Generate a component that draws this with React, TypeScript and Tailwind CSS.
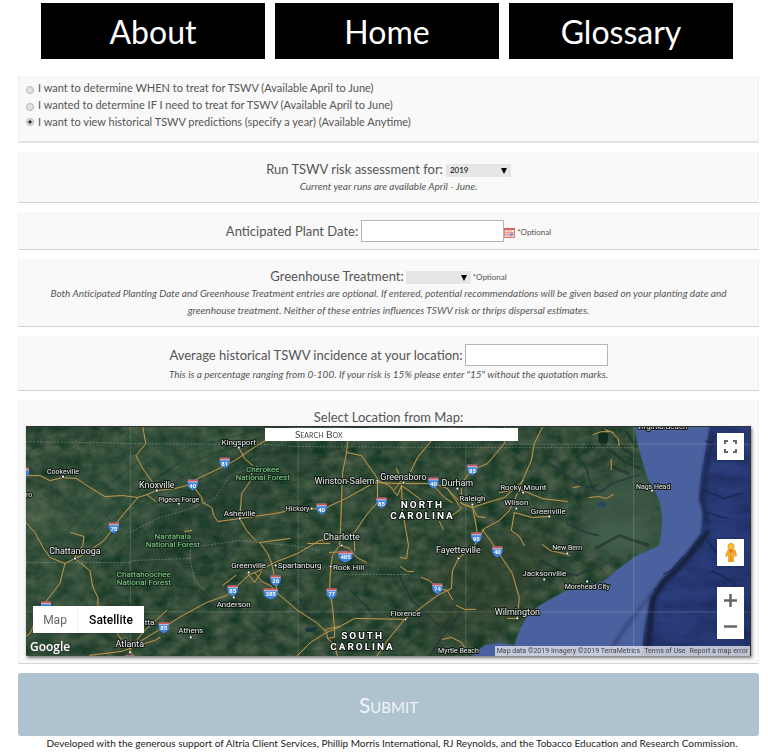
import React, { useState } from 'react';

type Label = { x: number; y: number; size: number; text: string; anchor?: 'start' | 'middle' | 'end'; dot?: [number, number] };
type Shield = { x: number; y: number; n: string };

const roads: string[] = [
  'M143 427L146 443L136 455L143 468L153 482L157 489',
  'M26 475L40 475L50 480L63 477L77 478L87 485L105 496L123 495L138 497L147 494L157 490L175 488L187 485L198 478L215 470L235 460L260 443L266 440',
  'M239 447L245 458L253 465L251 480L242 493L240 518L247 530L256 540',
  'M193 485L202 497L203 502L212 507L214 515L218 521L240 518L275 513L295 509L325 508L348 497L375 482L402 483L435 483L448 488L462 503L473 507L488 502L505 497L524 480',
  'M147 494L156 501M138 497L120 518L105 539L100 543L82 555L75 558L65 563L60 583L43 605L30 633L26 636',
  'M26 522L35 532L43 547L50 557L65 563M71 532L84 536L83 545L75 557',
  'M75 558L90 570L93 587L98 597L98 607L112 625L122 640L130 648L133 656',
  'M130 648L150 635L167 625L183 615L207 602L227 595L238 585L250 574L258 571L275 562L298 553L320 540L335 538L355 532L368 513L378 502L378 480',
  'M130 648L145 630L167 610M130 648L122 651L90 655M130 648L155 640L160 637M223 585L236 575M247 572L255 582L262 571',
  'M348 442L347 452L343 472L342 500L341 527L340 545L333 555L331 567L330 590L333 607L335 628',
  'M348 452L362 455L378 478M348 432L348 442M432 440L418 457L413 467L408 478L402 483',
  'M505 427L505 443L488 463L472 470L462 483M402 485L403 510L407 533L409 545L407 558L401 557',
  'M378 480L390 485L398 495L402 485L412 492L425 502M395 489L402 480L397 468',
  'M462 488L462 503L473 507L478 516L486 517M473 505L478 533M543 427L535 443L532 460L524 478L515 500L510 510L500 520L485 528L475 545L459 558L453 570L452 588L438 595L418 610L405 619L388 640L377 656',
  'M405 619L355 618L337 628L327 632L311 642L297 656',
  'M327 632L318 623L298 610L278 593L272 563L268 553L260 542M260 542L290 538',
  'M255 572L262 581L272 586L275 592M327 632L328 638L335 645L338 656M335 628L335 637L328 638M325 630L330 628L340 626',
  'M524 490L543 498L568 501M500 492L515 489L524 490M515 512L533 517L550 516M515 512L512 530L520 536L525 545',
  'M483 529L498 550L503 558L513 573L517 587L520 597L518 618L508 618',
  'M590 497L600 496L607 498L614 494M574 487L580 486M612 459L612 469M594 434L602 431L612 431L619 438L620 445M606 429L614 432',
  'M543 544L551 550L564 553L570 555M401 566L408 571L414 571M422 577L430 580L438 588L448 590L453 599M457 605L465 609L476 609M443 639L452 637L462 642L465 647',
  'M341 545L350 548L357 557L367 562M330 552L347 551M308 543L330 543M335 537L355 533L355 550',
  'M434 485L445 497L453 502M448 488L462 508L450 517M440 521L444 529M185 531L192 530',
];

const rivers: string[] = [
  'M550 463C560 468 568 478 580 483S592 488 600 483',
  'M582 461C590 468 588 478 594 487S605 488 612 483L640 474',
  'M568 523C578 528 588 534 600 535',
  'M540 560C555 565 565 575 578 575L590 568',
  'M475 595L455 620L440 640L430 656M400 575L412 600L440 625',
  'M300 598L315 625M351 590L372 612M222 560L228 552',
];

const labels: Label[] = [
  { x: 239, y: 444, size: 8, text: 'Kingsport', dot: [239, 447] },
  { x: 63, y: 473, size: 7, text: 'Cookeville', dot: [63, 476] },
  { x: 157, y: 487, size: 9, text: 'Knoxville', dot: [157, 490] },
  { x: 179, y: 501, size: 7, text: 'Pigeon Forge', dot: [179, 503] },
  { x: 26, y: 496, size: 7, text: 'ro', anchor: 'start' },
  { x: 240, y: 515, size: 8, text: 'Asheville', dot: [240, 518] },
  { x: 75, y: 554, size: 9, text: 'Chattanooga', dot: [75, 558] },
  { x: 249, y: 568, size: 8, text: 'Greenville', dot: [249, 572] },
  { x: 300, y: 568, size: 8, text: 'Spartanburg', dot: [276, 565] },
  { x: 349, y: 570, size: 8, text: 'Rock Hill', dot: [331, 566] },
  { x: 234, y: 607, size: 8, text: 'Anderson', dot: [234, 597] },
  { x: 191, y: 633, size: 8, text: 'Athens', dot: [191, 637] },
  { x: 145, y: 625, size: 8, text: 'tta', anchor: 'start' },
  { x: 130, y: 647, size: 9, text: 'Atlanta', dot: [130, 652] },
  { x: 345, y: 483, size: 9, text: 'Winston-Salem', dot: [378, 480] },
  { x: 404, y: 479, size: 9, text: 'Greensboro', dot: [404, 482] },
  { x: 458, y: 485, size: 9, text: 'Durham', dot: [458, 488] },
  { x: 473, y: 500, size: 8, text: 'Raleigh', dot: [473, 504] },
  { x: 298, y: 510, size: 7, text: 'Hickory', dot: [312, 508] },
  { x: 342, y: 540, size: 9, text: 'Charlotte', dot: [342, 545] },
  { x: 459, y: 553, size: 9, text: 'Fayetteville', dot: [459, 558] },
  { x: 406, y: 616, size: 8, text: 'Florence', dot: [406, 619] },
  { x: 459, y: 653, size: 7, text: 'Myrtle Beach' },
  { x: 524, y: 489, size: 8, text: 'Rocky Mount', dot: [524, 492] },
  { x: 517, y: 504, size: 8, text: 'Wilson', dot: [517, 508] },
  { x: 549, y: 513, size: 8, text: 'Greenville', dot: [550, 516] },
  { x: 654, y: 488, size: 7, text: 'Nags Head', dot: [653, 490] },
  { x: 663, y: 428, size: 8, text: 'Virginia Beach' },
  { x: 568, y: 550, size: 7, text: 'New Bern', dot: [568, 553] },
  { x: 545, y: 576, size: 8, text: 'Jacksonville', dot: [545, 579] },
  { x: 588, y: 589, size: 7, text: 'Morehead City', dot: [588, 581] },
  { x: 518, y: 615, size: 9, text: 'Wilmington', dot: [518, 618] },
];

const forests: [number, number, string, string][] = [
  [263, 471, 'Cherokee', 'National Forest'],
  [173, 539, 'Nantahala', 'National Forest'],
  [144, 577, 'Chattahoochee', 'National Forest'],
];

const states: [number, number, string, string][] = [
  [423, 507, 'NORTH', 'CAROLINA'],
  [363, 639, 'SOUTH', 'CAROLINA'],
];

const shields: Shield[] = [
  { x: 24, y: 472, n: '' }, { x: 225, y: 462, n: '81' }, { x: 193, y: 484, n: '40' }, { x: 114, y: 527, n: '75' },
  { x: 233, y: 590, n: '85' }, { x: 164, y: 627, n: '85' }, { x: 46, y: 606, n: '' }, { x: 322, y: 508, n: '40' },
  { x: 382, y: 502, n: '85' }, { x: 434, y: 482, n: '40' }, { x: 473, y: 469, n: '85' }, { x: 477, y: 537, n: '95' },
  { x: 346, y: 556, n: '485' }, { x: 276, y: 580, n: '26' }, { x: 271, y: 593, n: '385' }, { x: 332, y: 593, n: '77' },
  { x: 438, y: 588, n: '74' }, { x: 498, y: 551, n: '40' }, { x: 130, y: 660, n: '' },
];

function InterstateShield({ x, y, n }: Shield) {
  const w = n.length > 2 ? 7 : 5;
  return (
    <g transform={`translate(${x} ${y})`}>
      <path d={`M${-w} -5H${w}V-2C${w + 1} 2 ${w - 2} 4 0 6C${2 - w} 4 ${-w - 1} 2 ${-w} -2Z`} fill="#3f82dc" />
      <path d={`M${-w} -5H${w}V-3H${-w}Z`} fill="#d9564f" />
      <path d={`M${-w} -2.7H${w}`} stroke="#fff" strokeWidth=".6" />
      <text y="3" textAnchor="middle" fontSize="6" fontWeight="700" fill="#fff">{n}</text>
    </g>
  );
}

const coast =
  'M635 426L640 450L648 477L660 500L663 517L661 540L660 545L637 555L617 570L603 582L590 584L567 590L540 605L527 617L520 630L515 645L500 642L485 645L472 656H752V426Z';
const deep = 'M711 426L706 455L702 477L700 500L705 510L702 533L697 540L680 563L663 580L652 597L649 612L645 630L643 656H752V426Z';

function SatelliteMap() {
  return (
    <svg className="block h-full w-full" viewBox="26 426 725 230" preserveAspectRatio="xMidYMid slice" role="img" aria-label="Satellite map" fontFamily="Roboto, sans-serif">
      <defs>
        <filter id="terrain" x="0" y="0" width="1" height="1" colorInterpolationFilters="sRGB">
          <feTurbulence type="fractalNoise" baseFrequency=".07 .09" numOctaves="6" seed="8" />
          <feColorMatrix values=".30 .12 0 0 -.02  .22 .05 0 0 .16  .20 .07 0 0 .08  0 0 0 0 1" />
        </filter>
        <filter id="seabed" x="0" y="0" width="1" height="1" colorInterpolationFilters="sRGB">
          <feTurbulence type="fractalNoise" baseFrequency=".03 .08" numOctaves="4" seed="3" />
          <feColorMatrix values="0 0 0 0 .03  0 0 0 0 .06  0 0 0 0 .18  1.6 0 0 0 -.62" />
        </filter>
        <filter id="soft" x="-.2" y="-.2" width="1.4" height="1.4"><feGaussianBlur stdDeviation="7" /></filter>
        <filter id="edge" x="-.2" y="-.2" width="1.4" height="1.4"><feGaussianBlur stdDeviation="1.5" /></filter>
        <linearGradient id="abyss" x1="0" y1="0" x2="1" y2="1">
          <stop offset="0" stopColor="#28386f" /><stop offset=".5" stopColor="#2b3e7c" /><stop offset="1" stopColor="#22346e" />
        </linearGradient>
        <clipPath id="sea"><path d={coast} /></clipPath>
        <clipPath id="deepSea"><path d={deep} /></clipPath>
      </defs>
      <rect x="26" y="426" width="726" height="230" filter="url(#terrain)" />
      <g filter="url(#soft)">
        <path d="M26 530L120 426H260L200 480L110 560L60 656H26Z" fill="#3f6548" opacity=".22" />
        <path d="M150 510L250 450L330 440L240 520L180 580L110 600Z" fill="#163a2a" opacity=".3" />
        <path d="M440 540L560 530L540 590L480 640H420Z" fill="#303f2e" opacity=".35" />
        <path d="M600 480L650 465L662 520L655 548L615 560L575 540Z" fill="#405947" opacity=".8" />
        <ellipse cx="620" cy="535" rx="30" ry="13" fill="#43604e" />
        <path d="M26 480L55 500L45 530H26Z" fill="#65755a" opacity=".45" />
      </g>
      <g stroke="#173526" fill="none" opacity=".42">
        <path d="M70 560L120 500L180 462M82 570L130 512L205 462M94 580L140 530M64 535L100 490L155 450M110 590L128 560M180 450L265 428M190 462L262 437M205 500L265 455M212 520L260 485" />
      </g>
      <g stroke="#6e8a66" strokeWidth=".6" fill="none" opacity=".35">
        <path d="M74 564L124 504L184 462M90 572L136 520L170 496M70 535L108 490L160 450M186 458L263 433M200 482L265 448M128 432L110 446L80 442L60 456M30 450L55 445L72 458M280 605L305 595M380 565L420 548" />
      </g>
      <g stroke="#25363b" fill="none" strokeWidth="2" opacity=".7">{rivers.map((d) => <path key={d} d={d} />)}</g>
      <ellipse cx="604" cy="437" rx="5" ry="8" fill="#122c20" />
      <ellipse cx="603" cy="504" rx="4" ry="3" fill="#244b5b" />
      <path d="M305 628L318 626L315 631L307 632Z" fill="#17363e" />
      <g stroke="#1c3027" fill="none" strokeWidth="3" opacity=".6">
        <path d="M614 437L626 450L635 455M612 450L626 462L642 468M610 465L630 473M627 430L637 447M596 548L620 535L650 545" />
      </g>
      <path d={coast} fill="#4b609e" stroke="#315e5a" strokeWidth="1" />
      <g clipPath="url(#sea)">
        <path d={deep} fill="#29396b" filter="url(#edge)" />
        <g clipPath="url(#deepSea)">
          <rect x="640" y="426" width="112" height="230" fill="url(#abyss)" />
          <rect x="640" y="426" width="112" height="230" filter="url(#seabed)" opacity=".4" />
        </g>
        <g filter="url(#edge)" fill="none">
          <path d="M710 530L696 548L682 565L664 582L654 598L652 615L648 656" stroke="#18223f" strokeWidth="6" />
          <path d="M714 434L707 470L704 500L708 525" stroke="#1e2a54" strokeWidth="5" />
          <path d="M650 597L630 620L605 656M658 585L640 610L615 645" stroke="#394a80" strokeWidth="2" />
        </g>
        <path d="M664 574L672 570L684 556M655 590L665 582M708 540L718 553L734 558M712 570L735 582L740 605M706 440L720 446L735 440M706 490L725 498L745 492M708 512L728 518" fill="none" stroke="#16214a" strokeWidth="1.5" opacity=".7" />
      </g>
      <g stroke="#dbe6e0" strokeWidth=".7" opacity=".28">
        <path d="M130.500 426V656M298.500 426V656M466.500 426V656M634.500 426V656M26 611.500H751M500 443.500H751" />
      </g>
      <path d="M26 441L100 442L130 443L270 444L300 446L500 447L634 447M26 562L130 562L133 560L190 558L191 547L240 540L300 546L320 550M345 574L412 574M190 558L195 580L215 600M130 532L160 517L185 510L215 498L230 475L260 465" fill="none" stroke="#c8d5c9" strokeWidth=".8" strokeDasharray="2 1.500" opacity=".4" />
      <g fill="none" strokeLinejoin="round" strokeLinecap="round">
        {roads.map((d) => <path key={d} d={d} stroke="#6a5526" strokeWidth="2" opacity=".45" />)}
        {roads.map((d) => <path key={d} d={d} stroke="#b69a55" strokeWidth="1" />)}
      </g>
      {shields.map((s) => <InterstateShield key={`${s.x}-${s.y}`} {...s} />)}
      <g stroke="#101814" strokeWidth="2" strokeLinejoin="round" paintOrder="stroke" fill="#e9ece9">
        {labels.map((l) => (
          <g key={`${l.text}${l.x}`}>
            {l.dot && <rect x={l.dot[0] - 1} y={l.dot[1] - 1} width="2" height="2" fill="#fff" strokeWidth="1" />}
            <text x={l.x} y={l.y} fontSize={l.size} textAnchor={l.anchor ?? 'middle'}>{l.text}</text>
          </g>
        ))}
        {forests.map(([x, y, a, b]) => (
          <text key={a} fontSize="8" textAnchor="middle" fill="#86cf8b" stroke="#14291b">
            <tspan x={x} y={y}>{a}</tspan><tspan x={x} y={y + 8}>{b}</tspan>
          </text>
        ))}
        {states.map(([x, y, a, b]) => (
          <text key={a} className="tracking-[2px]" fontSize="10" fontWeight="700" textAnchor="middle" fill="#fff">
            <tspan x={x} y={y}>{a}</tspan><tspan x={x} y={y + 11}>{b}</tspan>
          </text>
        ))}
      </g>
    </svg>
  );
}

function Card({ children }: { children: React.ReactNode }) {
  return (
    <section className="border-x border-b border-x-[#f2f2f2] border-b-[#d2d2d2] bg-[#f9f9f9] px-[7px] pt-2 pb-[7px] text-center">
      {children}
    </section>
  );
}

const labelText = 'text-[13px] leading-[18px]';
const noteText = 'px-2 text-[10px] leading-[17px] italic';

function SmallSelect({ id, options, initial }: { id: string; options: string[]; initial: string }) {
  return (
    <span className="relative mt-[2px] inline-block">
      <select id={id} defaultValue={initial} className="block h-[13px] w-[65px] appearance-none bg-[#e6e6e6] pl-1 text-[8px] leading-[13px] text-black">
        {options.map((o) => <option key={o}>{o}</option>)}
      </select>
      <svg className="pointer-events-none absolute top-1 right-1 h-[6px] w-[6px]" viewBox="0 0 6 6" aria-hidden="true"><path d="M0 0H6L3 6Z" /></svg>
    </span>
  );
}

function CalendarIcon() {
  return (
    <svg className="h-[10px] w-[11px]" viewBox="0 0 11 10" aria-hidden="true">
      <rect width="11" height="10" fill="#e08078" />
      <path d="M0 0H11V2H0Z" fill="#d4665d" />
      <path d="M1 2H10V9H1Z" fill="#fbe3e0" />
      <path d="M1 4.500H10M1 6.500H10M3 2V9M5 2V9M7 2V9" stroke="#e58e85" strokeWidth=".8" />
      <rect x="6" y="5" width="3" height="3" fill="#7f9be0" />
    </svg>
  );
}

const modes = [
  'I want to determine WHEN to treat for TSWV (Available April to June)',
  'I wanted to determine IF I need to treat for TSWV (Available April to June)',
  'I want to view historical TSWV predictions (specify a year) (Available Anytime)',
];

const mapButton = 'flex items-center justify-center bg-white shadow';

export default function App() {
  const [mode, setMode] = useState(2);
  return (
    <main className="bg-white pt-[3px] pr-[9px] pl-[18px] font-['Lato',sans-serif] text-[#555]">
      <nav className="mb-[17px] grid grid-cols-3 gap-[10px] pr-[26px] pl-[23px]">
        {['About', 'Home', 'Glossary'].map((t) => (
          <a key={t} href="#" className="flex h-14 items-center justify-center bg-black pt-[2px] text-[32px] text-white">{t}</a>
        ))}
      </nav>
      <form className="flex flex-col gap-[9px]" onSubmit={(e) => e.preventDefault()}>
        <fieldset className="border-x border-b-2 border-x-[#eee] border-b-[#e2e2e2] bg-[#f9f9f9] px-[7px] pt-[3px] pb-[11px]">
          {modes.map((m, i) => (
            <label key={m} className="flex h-[17px] items-center gap-1 text-[11px] leading-[17px]">
              <input
                type="radio"
                name="mode"
                checked={mode === i}
                onChange={() => setMode(i)}
                className="mt-1 h-2 w-2 appearance-none rounded-full border border-[#b5b5b5] bg-[#e2e2e2] checked:mt-0 checked:bg-[radial-gradient(#333_30%,#e2e2e2_50%)]"
              />
              {m}
            </label>
          ))}
        </fieldset>

        <Card>
          <div className={`flex items-center justify-center gap-[3px] ${labelText}`}>
            <label htmlFor="year">Run TSWV risk assessment for:</label>
            <SmallSelect id="year" initial="2019" options={['2017', '2018', '2019']} />
          </div>
          <p className={noteText}>Current year runs are available April - June.</p>
        </Card>

        <Card>
          <div className={`flex items-center justify-center ${labelText}`}>
            <label htmlFor="plant" className="mr-[3px]">Anticipated Plant Date:</label>
            <input id="plant" type="text" className="h-[22px] w-[143px] border border-[#b5b5b5] bg-white px-1 text-[12px]" />
            <button type="button" aria-label="Pick a date" className="mt-[3px] mr-[2px]"><CalendarIcon /></button>
            <span className="mt-[3px] text-[8px] leading-[13px]">*Optional</span>
          </div>
        </Card>

        <Card>
          <div className={`flex items-center justify-center gap-[2px] ${labelText}`}>
            <label htmlFor="greenhouse">Greenhouse Treatment:</label>
            <SmallSelect id="greenhouse" initial="" options={['', 'Yes', 'No']} />
            <span className="mt-[3px] text-[8px] leading-[13px]">*Optional</span>
          </div>
          <p className={noteText}>
            Both Anticipated Planting Date and Greenhouse Treatment entries are optional. If entered, potential recommendations will be given based on your planting date and greenhouse treatment. Neither of these entries influences TSWV risk or thrips dispersal estimates.
          </p>
        </Card>

        <Card>
          <div className={`flex items-center justify-center gap-[2px] ${labelText}`}>
            <label htmlFor="incidence">Average historical TSWV incidence at your location:</label>
            <input id="incidence" type="text" className="h-[22px] w-[143px] border border-[#b5b5b5] bg-white px-1 text-[12px]" />
          </div>
          <p className={noteText}>This is a percentage ranging from 0-100. If your risk is 15% please enter "15" without the quotation marks.</p>
        </Card>

        <Card>
          <h2 className={labelText}>Select Location from Map:</h2>
          <div className="relative h-[230px] overflow-hidden border-t border-r border-[#333] font-['Roboto',sans-serif] shadow-[1px_2px_3px_#777]">
            <SatelliteMap />
            <input
              type="text"
              aria-label="Search Box"
              placeholder="Search Box"
              className="absolute top-[1px] left-[33%] h-[13px] w-[35%] bg-white pl-[30px] font-['Lato',sans-serif] text-[10px] [font-variant:small-caps] placeholder:text-[#444]"
            />
            <div className="absolute bottom-[23px] left-[7px] flex h-[27px] bg-white text-[12px] shadow">
              <button type="button" className="w-[45px] border-r border-[#eee] text-[#666]">Map</button>
              <button type="button" className="w-[66px] font-medium text-black">Satellite</button>
            </div>
            <span className="absolute bottom-[1px] left-1 font-['Open_Sans',sans-serif] text-[12px] leading-[16px] font-semibold text-white [text-shadow:0_0_2px_#333]">Google</span>
            <button type="button" aria-label="Full screen" className={`absolute top-[6px] right-[6px] h-[27px] w-[27px] ${mapButton}`}>
              <svg className="h-[13px] w-[13px]" viewBox="0 0 13 13" fill="none" stroke="#666" strokeWidth="2" aria-hidden="true"><path d="M1 4V1H4M9 1H12V4M12 9V12H9M4 12H1V9" /></svg>
            </button>
            <button type="button" aria-label="Street view" className={`absolute right-[6px] bottom-[90px] h-[27px] w-[27px] ${mapButton}`}>
              <svg className="h-5 w-[12px]" viewBox="0 0 12 20" aria-hidden="true">
                <path d="M2 8Q2 6 4 6H8Q10 6 11 8L12 13L10 14L9 12V19H3V12L2 14L0 13Z" fill="#f0a830" />
                <path d="M4 7L6 10L8 7Z" fill="#e06a2a" />
                <path d="M6 13V19" stroke="#c98017" strokeWidth=".8" />
                <circle cx="6" cy="3.500" r="3.200" fill="#f6b93b" stroke="#d99020" strokeWidth=".6" />
              </svg>
            </button>
            <div className="absolute right-[6px] bottom-[17px] flex w-[27px] flex-col">
              <button type="button" aria-label="Zoom in" className="flex h-[26px] items-center justify-center bg-white">
                <svg className="h-[13px] w-[13px]" viewBox="0 0 13 13" stroke="#666" strokeWidth="2.500" aria-hidden="true"><path d="M0 6.500H13M6.500 0V13" /></svg>
              </button>
              <button type="button" aria-label="Zoom out" className="flex h-[26px] items-center justify-center bg-white">
                <svg className="h-[13px] w-[13px]" viewBox="0 0 13 13" stroke="#666" strokeWidth="2.500" aria-hidden="true"><path d="M0 6.500H13" /></svg>
              </button>
            </div>
            <div className="absolute right-0 bottom-0 flex h-[10px] gap-1 bg-[#e4e6ec]/80 px-[2px] text-[7px] leading-[10px] text-[#444]">
              <span>Map data ©2019 Imagery ©2019 TerraMetrics</span>
              <a href="#">Terms of Use</a>
              <a href="#">Report a map error</a>
            </div>
          </div>
        </Card>

        <button type="submit" className="h-[63px] rounded-[3px] bg-[#aec2d0] text-[21px] text-[#f0f5f8] [font-variant:small-caps]">Submit</button>
      </form>
      <footer className="pl-[7px] text-center text-[10px] leading-[14px] text-[#222]">
        Developed with the generous support of Altria Client Services, Phillip Morris International, RJ Reynolds, and the Tobacco Education and Research Commission.
      </footer>
    </main>
  );
}
